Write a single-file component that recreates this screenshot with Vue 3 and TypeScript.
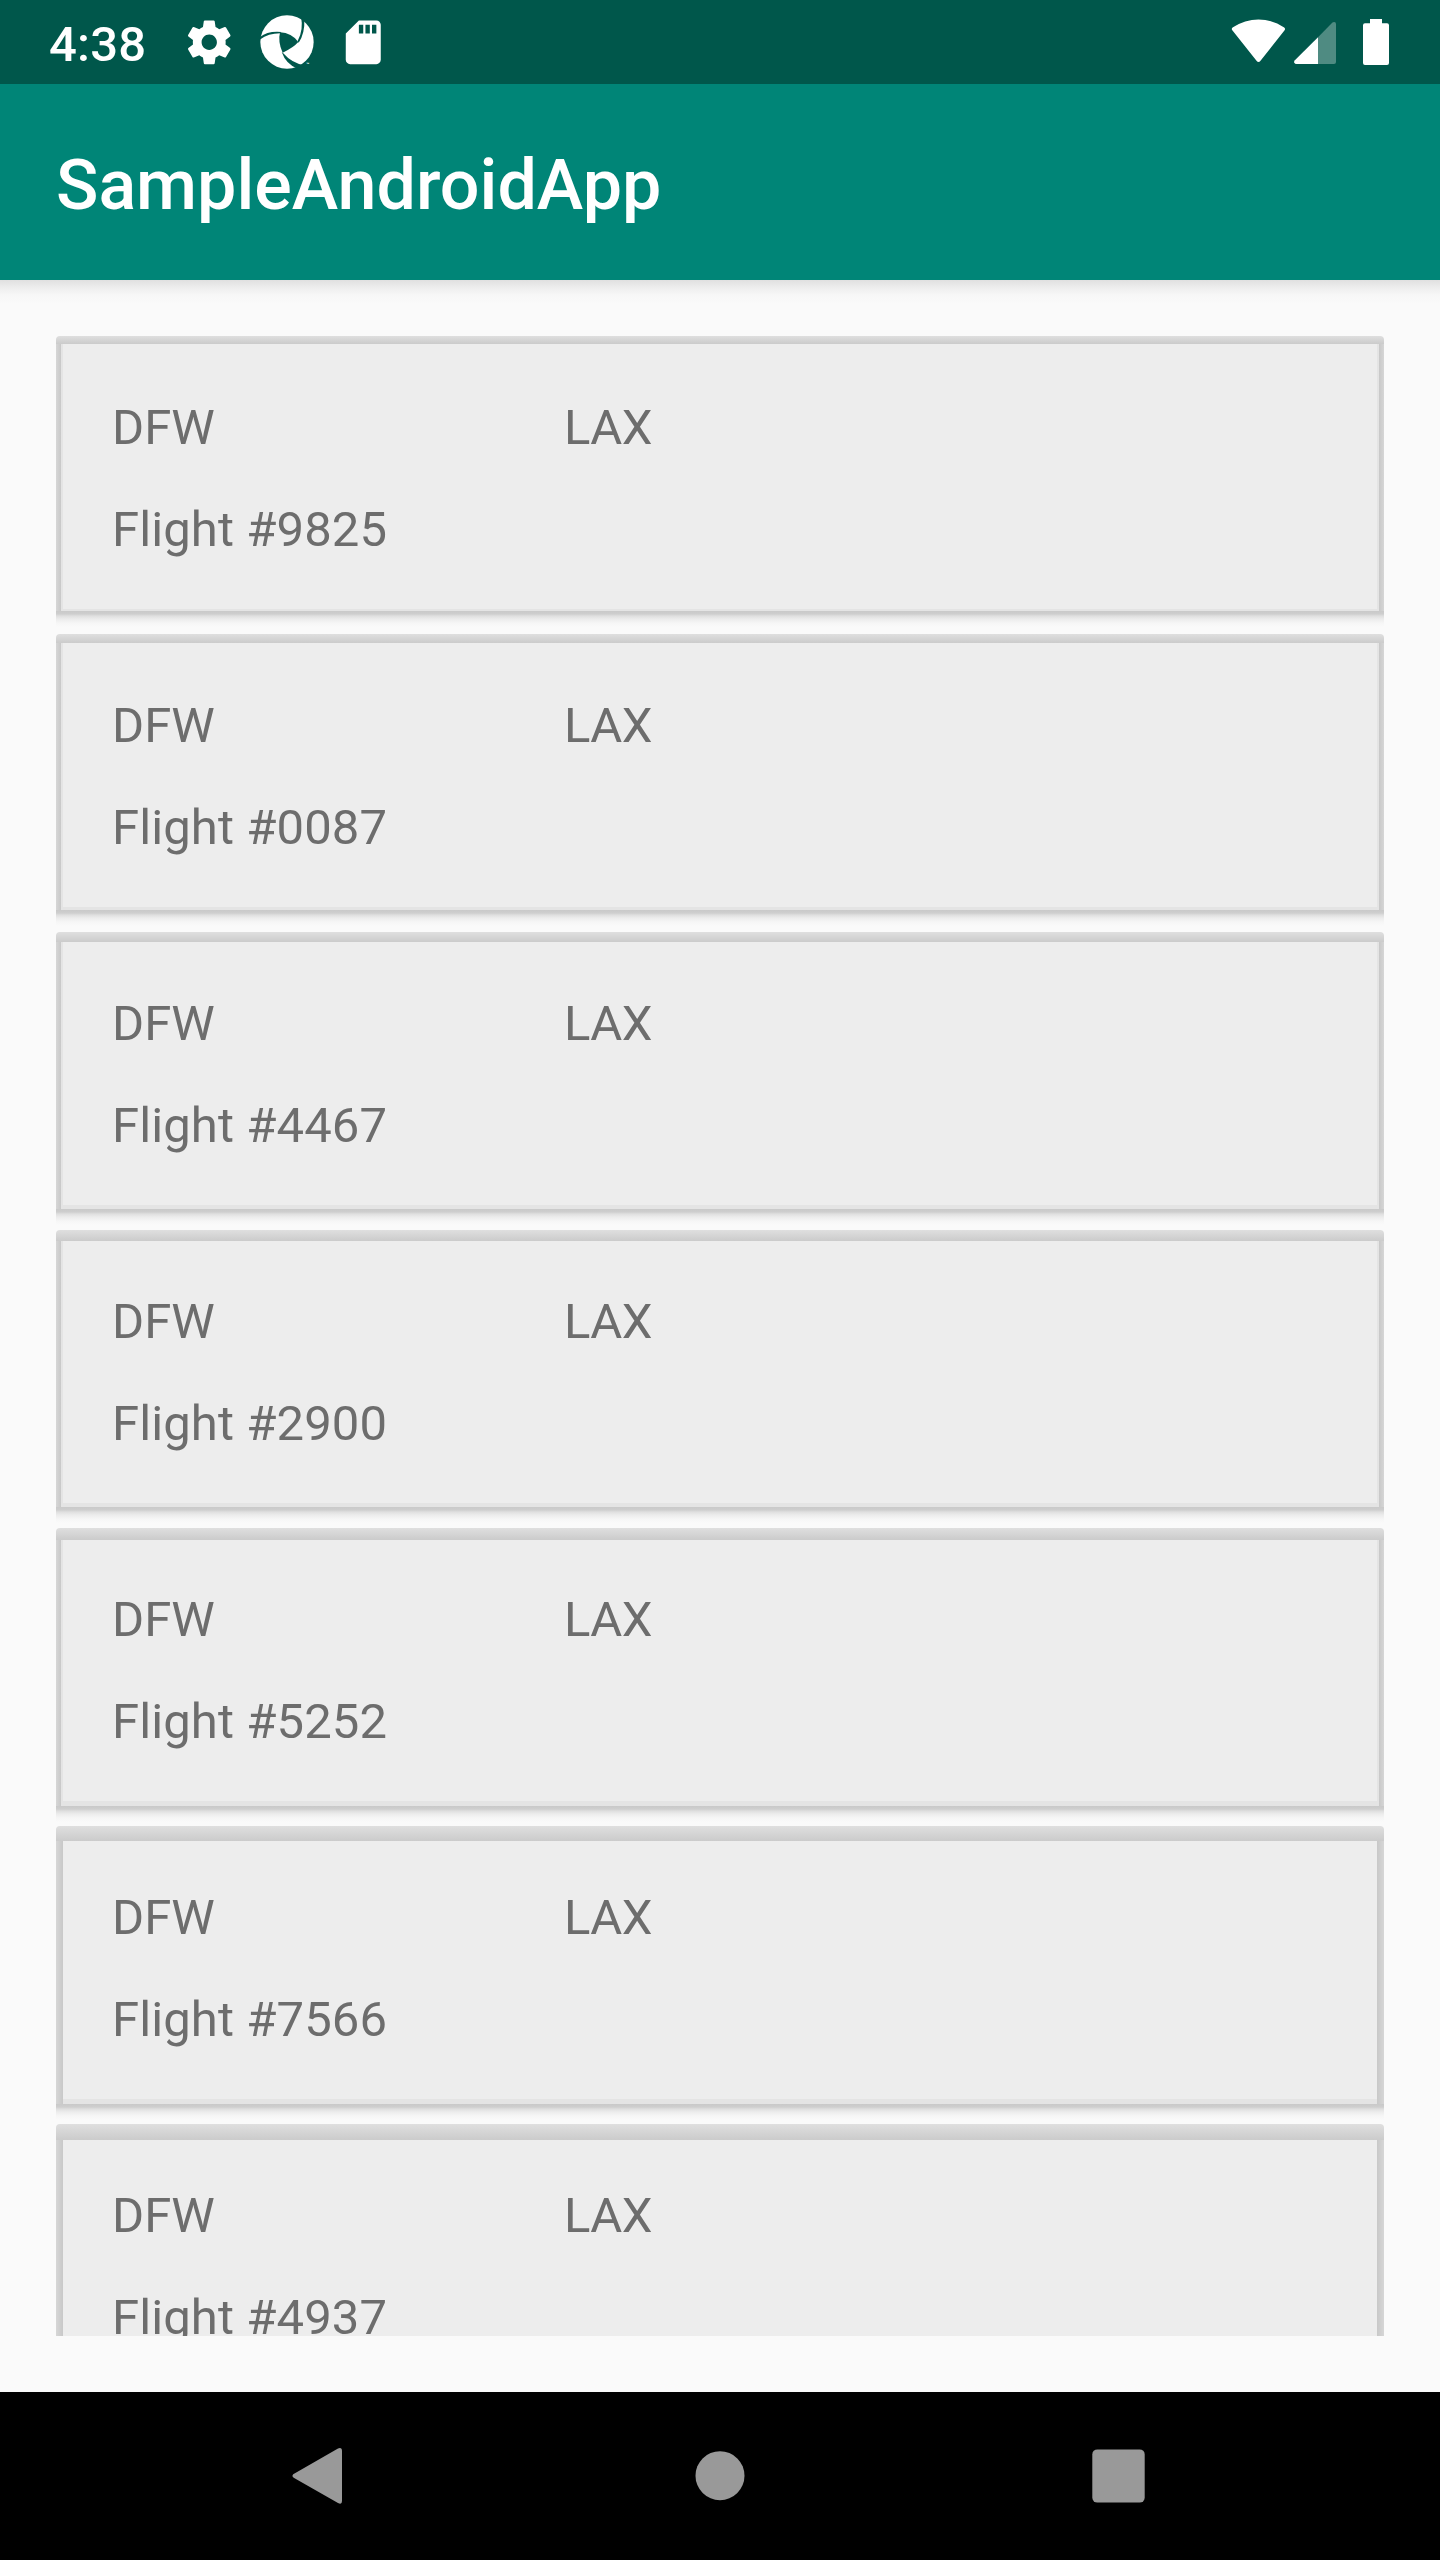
<script setup lang="ts">
interface Flight {
  from: string
  to: string
  number: string
  // Elevation shadow geometry, which grows as the row gets lower on the screen
  top: number
  side: number
  faceEnd: number
  rim: number
}

const flights: Flight[] = [
  { from: 'DFW', to: 'LAX', number: '9825', top: 8, side: 5, faceEnd: 275, rim: 2 },
  { from: 'DFW', to: 'LAX', number: '0087', top: 9, side: 5, faceEnd: 276, rim: 3 },
  { from: 'DFW', to: 'LAX', number: '4467', top: 10, side: 5, faceEnd: 277, rim: 4 },
  { from: 'DFW', to: 'LAX', number: '2900', top: 11, side: 5, faceEnd: 277, rim: 4 },
  { from: 'DFW', to: 'LAX', number: '5252', top: 12, side: 5, faceEnd: 278, rim: 5 },
  { from: 'DFW', to: 'LAX', number: '7566', top: 15, side: 7, faceEnd: 278, rim: 5 },
  { from: 'DFW', to: 'LAX', number: '4937', top: 16, side: 7, faceEnd: 279, rim: 6 },
]

function geometry(f: Flight) {
  return {
    '--top': `${f.top}px`,
    '--side': `${f.side}px`,
    '--face-end': `${f.faceEnd}px`,
    '--rim': `${f.rim}px`,
    '--side-rim': f.side === 5 ? '2px' : '0px',
  }
}
</script>

<template>
  <div class="screen">
    <div class="status">
      <span class="clock">4:38</span>
      <svg class="gear" width="52.5" height="52.5" viewBox="0 0 24 24" fill="#fff">
        <path d="M19.43 12.98c.04-.32.07-.64.07-.98s-.03-.66-.07-.98l2.11-1.65c.19-.15.24-.42.12-.64l-2-3.46c-.12-.22-.39-.3-.61-.22l-2.49 1c-.52-.4-1.08-.73-1.69-.98l-.38-2.65C14.46 2.18 14.25 2 14 2h-4c-.25 0-.46.18-.49.42l-.38 2.65c-.61.25-1.17.59-1.69.98l-2.49-1c-.23-.09-.49 0-.61.22l-2 3.46c-.13.22-.07.49.12.64l2.11 1.65c-.04.32-.07.65-.07.98s.03.66.07.98l-2.11 1.65c-.19.15-.24.42-.12.64l2 3.46c.12.22.39.3.61.22l2.49-1c.52.4 1.08.73 1.69.98l.38 2.65c.03.24.24.42.49.42h4c.25 0 .46-.18.49-.42l.38-2.65c.61-.25 1.17-.59 1.69-.98l2.49 1c.23.09.49 0 .61-.22l2-3.46c.12-.22.07-.49-.12-.64l-2.11-1.65zM12 15.5c-1.93 0-3.5-1.57-3.5-3.5s1.57-3.5 3.5-3.5 3.5 1.57 3.5 3.5-1.57 3.5-3.5 3.5z" />
      </svg>
      <svg class="shutter" width="54" height="54" viewBox="778 46 162 162">
        <circle cx="859" cy="127" r="80" fill="#fff" />
        <g fill="#00574b">
          <path d="M838 98 Q873 100 893 127 Q878 144 846 159 Q831 128 838 98Z" />
          <path d="M776 114 Q800 93 842 97 L838 101 Q802 101 776 121Z" />
          <path d="M901 50 Q909 92 891 124 L894 129 Q913 102 911 58Z" />
          <path d="M843 157 Q856 194 892 208 L912 197 Q874 191 847 160Z" />
        </g>
        <text x="917" y="200" class="tm">™</text>
      </svg>
      <svg class="sd" width="52.5" height="52.5" viewBox="0 0 24 24" fill="#fff">
        <path d="M18 2h-8L4.02 8 4 20c0 1.1.9 2 2 2h12c1.1 0 2-.9 2-2V4c0-1.1-.9-2-2-2zm-6 6h-2V4h2v4zm3 0h-2V4h2v4zm3 0h-2V4h2v4z" />
      </svg>
      <svg class="system" width="160" height="50" viewBox="1231 18 160 50">
        <path d="M1232.5 30.6 Q1231 29 1232.6 27.4 C1249 16.7 1268 16.7 1284.2 27.4 Q1285.8 29 1284.4 30.6 L1260.5 60.8 Q1258.5 63.2 1256.5 60.8Z" fill="#fff" />
        <path d="M1318 37.2 L1332.2 22.8 Q1333 22 1334.2 22 Q1336 22 1336 24 V62 Q1336 64 1334 64 H1318Z" fill="#4f8b82" />
        <path d="M1318 37.2 L1294.6 60.6 Q1293.8 61.5 1294.2 62.5 Q1294.8 64 1296.5 64 H1318Z" fill="#fff" />
        <path d="M1370 19h12v4.3h5q2 0 2 2V63q0 2-2 2h-22q-2 0-2-2V25.3q0-2 2-2h5z" fill="#fff" />
      </svg>
    </div>

    <header class="appbar"><h1>SampleAndroidApp</h1></header>

    <main class="content">
      <div class="list">
        <div v-for="f in flights" :key="f.number" class="card" :style="geometry(f)">
          <div class="face">
            <div class="rows">
              <div class="route"><span>{{ f.from }}</span><span class="to">{{ f.to }}</span></div>
              <div class="number">Flight #{{ f.number }}</div>
            </div>
          </div>
        </div>
      </div>
    </main>

    <nav class="navbar">
      <svg width="54" height="58" viewBox="0 0 54 58"><path d="M2.2 27.2 L47 1.5 Q51 0 51 4 V54 Q51 58 47 56 L4 31.5 Q0 29.5 2.2 27.2Z" fill="#999" /></svg>
      <svg class="home" width="50" height="50" viewBox="0 0 50 50"><circle cx="25" cy="24.7" r="24.5" fill="#999" /></svg>
      <svg width="53" height="54" viewBox="0 0 53 54"><rect x=".3" y=".4" width="52.4" height="53.2" rx="5" fill="#999" /></svg>
    </nav>
  </div>
</template>

<style>
body {
  margin: 0;
  background: #fafafa;
}
</style>

<style scoped>
.screen {
  width: 1440px;
  height: 2560px;
  display: flex;
  flex-direction: column;
  overflow: hidden;
  background: #fafafa;
  font-family: Roboto, "Liberation Sans", sans-serif;
}
.status {
  flex: none;
  height: 84px;
  box-sizing: border-box;
  display: flex;
  align-items: flex-start;
  padding: 16px 49px 0 49px;
  background: #00574b;
}
svg {
  display: block;
  flex: none;
}
.clock {
  width: 134px;
  font-size: 49px;
  font-weight: 500;
  line-height: 58px;
  letter-spacing: 0.2px;
  color: #fff;
}
.shutter {
  margin: -1px 0 0 24px;
}
.sd {
  margin-left: 23px;
}
.system {
  margin: 2px 0 0 auto;
}
.tm {
  font-size: 14px;
  font-weight: 700;
  fill: #fff;
}
.appbar {
  flex: none;
  position: relative;
  height: 196px;
  display: flex;
  align-items: center;
  padding-left: 56px;
  background: #008577;
}
.appbar::after {
  content: "";
  position: absolute;
  left: 0;
  right: 0;
  top: 100%;
  height: 24px;
  background: linear-gradient(#e0e0e0, #eeeeee 8px, #f7f7f7 15px, #fafafa);
}
h1 {
  margin: 6px 0 0;
  font-size: 70px;
  font-weight: 500;
  line-height: 82px;
  color: #fff;
}
.content {
  flex: 1;
  min-height: 0;
  box-sizing: border-box;
  padding: 56px;
}
.list {
  height: 100%;
  overflow: hidden;
}
.card {
  height: 298px;
  box-sizing: border-box;
  padding: var(--top) var(--side) 0;
  border-top-left-radius: 4px;
  border-top-right-radius: 4px;
  background:
    linear-gradient(#c9c9c9, #cecece 3px, #dfdfdf 5px, #ececec 8px, #f6f6f6 12px, #fafafa 16px) 0 var(--face-end) / 100% 30px no-repeat,
    linear-gradient(#dfdfdf, #cbcbcb) 0 0 / 100% var(--top) no-repeat,
    linear-gradient(90deg, #d6d6d6, #c8c8c8 var(--side), #c8c8c8 calc(100% - var(--side)), #d6d6d6);
}
.face {
  height: calc(var(--face-end) - var(--top));
  box-sizing: border-box;
  background: #ededed;
  box-shadow:
    inset var(--side-rim) 0 #e4e4e4,
    inset calc(var(--side-rim) * -1) 0 #e4e4e4,
    inset 0 calc(var(--rim) * -1) #e4e4e4;
}
.rows {
  padding: calc(63px - var(--top)) 0 0 calc(56px - var(--side));
  font-size: 49px;
  line-height: 58px;
  color: #6d6d6d;
}
.route {
  display: flex;
  margin-bottom: 44px;
}
.route span {
  width: 452px;
}
.route .to {
  letter-spacing: -0.5px;
}
.number {
  letter-spacing: 0.1px;
}
.navbar {
  flex: none;
  height: 168px;
  box-sizing: border-box;
  display: flex;
  align-items: center;
  justify-content: space-between;
  padding: 0 295px 0 291px;
  background: #000;
}
.home {
  margin-left: 2px;
}
</style>
